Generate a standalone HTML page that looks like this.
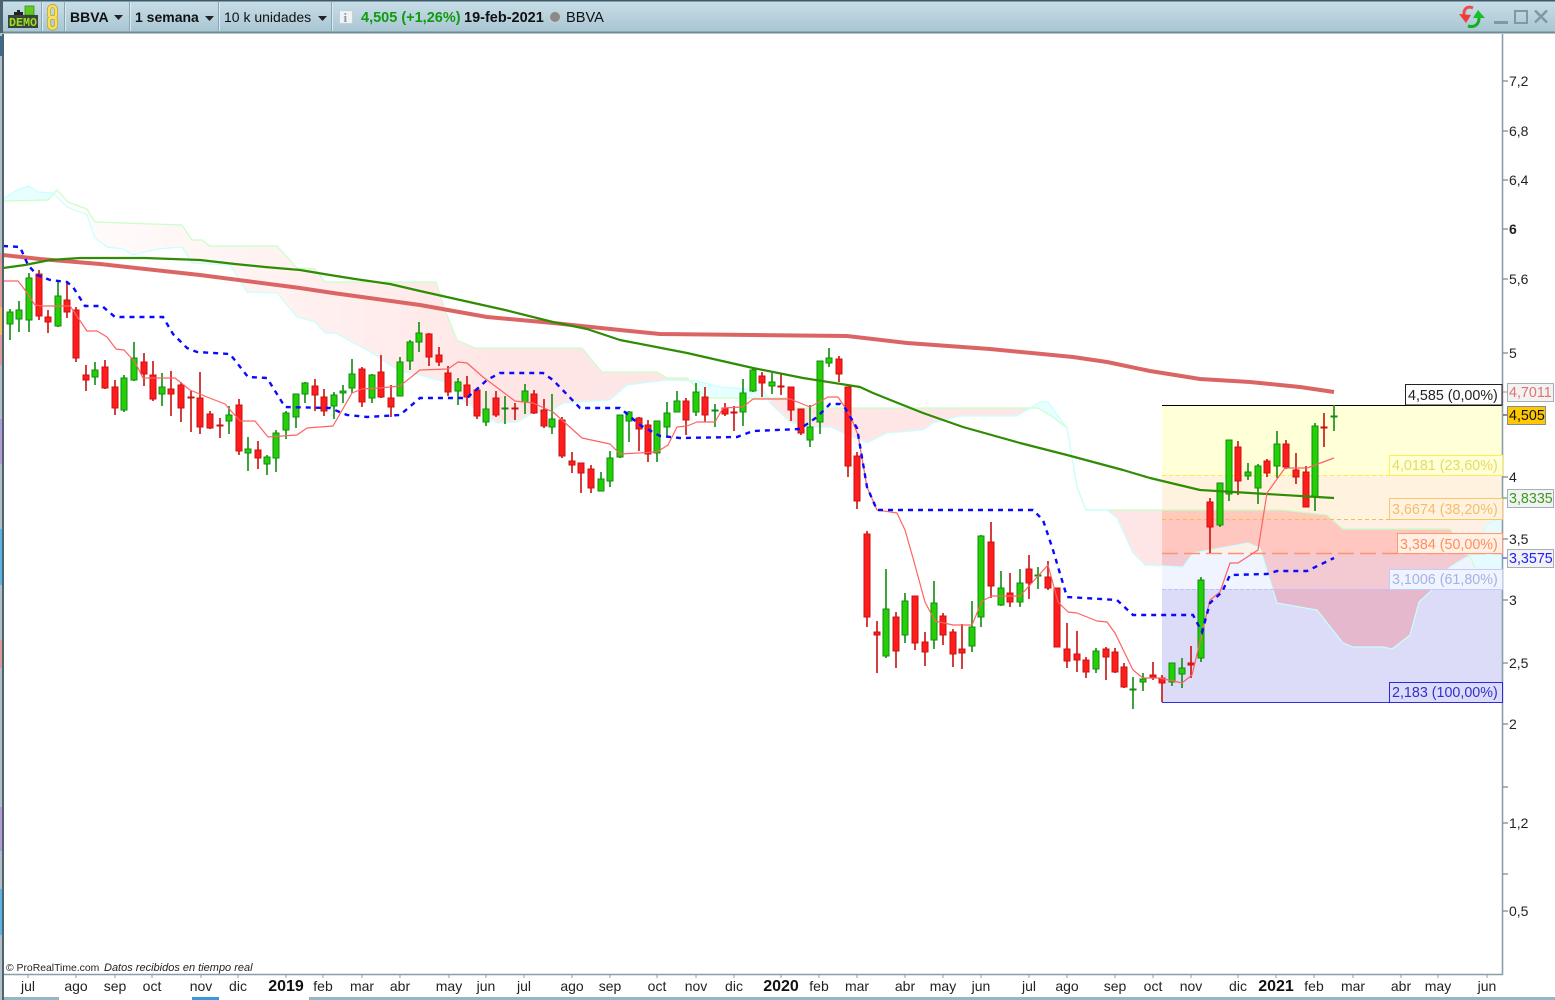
<!DOCTYPE html>
<html><head><meta charset="utf-8"><title>BBVA</title>
<style>
html,body{margin:0;padding:0;background:#fff;width:1555px;height:1000px;overflow:hidden}
svg{display:block;font-family:"Liberation Sans",sans-serif}
.ax{font-size:14px;fill:#222}
.xl{font-size:14px;fill:#222;text-anchor:middle}
.xb{font-size:16px;font-weight:bold;fill:#111;text-anchor:middle}
.fb{font-size:14.3px}
.tb{font-size:14px;fill:#111}
.b{font-weight:bold}
</style></head><body>
<svg width="1555" height="1000" viewBox="0 0 1555 1000" xmlns="http://www.w3.org/2000/svg">
<defs>
<linearGradient id="tbg" x1="0" y1="0" x2="0" y2="1"><stop offset="0" stop-color="#c9dfe8"/><stop offset="1" stop-color="#a7c5d2"/></linearGradient>
<linearGradient id="pk" gradientUnits="userSpaceOnUse" x1="60" y1="0" x2="500" y2="0"><stop offset="0" stop-color="#fffcfc"/><stop offset=".5" stop-color="#fff2f1"/><stop offset="1" stop-color="#ffe6e6"/></linearGradient>
<clipPath id="fibc"><rect x="1162" y="405" width="340" height="297"/></clipPath>
<clipPath id="chart"><rect x="4" y="34" width="1498" height="940"/></clipPath>
</defs>
<rect width="1555" height="1000" fill="#fff"/>

<!-- left edge -->
<rect x="0" y="34" width="2" height="966" fill="#b4c0c8"/>
<rect x="0" y="36" width="2" height="20" fill="#3a6a90"/>
<rect x="0" y="253" width="2" height="54" fill="#dd9a98"/>
<rect x="0" y="307" width="2" height="28" fill="#f0c060"/>
<rect x="0" y="335" width="2" height="30" fill="#dd9a98"/>
<rect x="0" y="419" width="2" height="45" fill="#b59ad8"/>
<rect x="0" y="529" width="2" height="56" fill="#5cb4e4"/>
<rect x="0" y="640" width="2" height="28" fill="#dd9a98"/>
<rect x="0" y="807" width="2" height="44" fill="#b59ad8"/>
<rect x="0" y="889" width="2" height="46" fill="#5cb4e4"/>
<rect x="2" y="34" width="2" height="966" fill="#4d6470"/>

<!-- cloud base -->
<g clip-path="url(#chart)">
<polygon fill="#e8ffff" points="3,199 17,190 29,186 38,192 53,193 55,193 48,200 3,201"/>
<polygon fill="url(#pk)" points="55,193 57,190 68,202 87,209 95,222 182,225 192,240 202,240 210,246 277,246 297,268 315,269 325,282 436,282 445,310 457,340 475,348 582,348 602,372 657,372 667,378 687,378 689,380 667,380 627,385 610,400 563,403 553,410 533,413 517,422 497,423 477,410 463,400 447,382 433,379 420,375 405,372 393,367 367,350 335,333 325,333 315,322 297,317 277,293 247,292 230,265 192,263 182,247 157,249 133,255 123,249 107,247 95,238 87,215 67,207"/>
<polygon fill="#e8ffff" points="689,380 697,381 720,387 763,390 770,398 707,398"/>
<polygon fill="#ffe6e6" points="770,398 787,398 792,408 1032,408 1017,416 960,416 933,423 923,430 887,433 867,443 850,437 830,427 810,427 790,422 770,403"/>
<polygon fill="#e8ffff" points="1032,408 1040,402 1048,402 1067,428 1053,417 1038,408"/>
<polygon fill="#ffe6e6" points="1086,510 1283,510 1327,515 1343,529 1450,529 1470,556 1450,567 1430,592 1419,602 1410,635 1392,649 1383,647 1353,647 1343,643 1317,610 1277,603 1260,548 1248,543 1193,553 1183,567 1145,565 1133,553 1117,518 1107,510"/>

<!-- fibonacci bands -->
<rect x="1162" y="405" width="340" height="70" fill="#ffffd8"/>
<rect x="1162" y="475" width="340" height="44" fill="#fff3e0"/>
<rect x="1162" y="519" width="340" height="34" fill="#fff0e5"/>
<rect x="1162" y="553" width="340" height="36" fill="#f0f4ff"/>
<rect x="1162" y="589" width="340" height="113" fill="#dcdcf8"/>
<polygon clip-path="url(#fibc)" fill="#ff5a5a" fill-opacity=".27" points="1086,510 1283,510 1327,515 1343,529 1450,529 1470,556 1450,567 1430,592 1419,602 1410,635 1392,649 1383,647 1353,647 1343,643 1317,610 1277,603 1260,548 1248,543 1193,553 1183,567 1145,565 1133,553 1117,518 1107,510"/>
<polygon fill="#e4fbff" fill-opacity=".85" points="1470,556 1487,524 1502,518 1502,568 1475,568"/>

<!-- cloud edges -->
<polyline fill="none" stroke="#c8ffc8" stroke-width="1.2" points="3,201 48,200 57,190 68,202 87,209 95,222 182,225 192,240 202,240 210,246 277,246 297,268 315,269 325,282 436,282 445,310 457,340 475,348 582,348 602,372 657,372 667,378 687,378 707,398 787,398 792,408 1038,408 1053,417 1067,428 1077,487 1086,510 1283,510 1327,515 1343,529 1450,529 1470,556 1475,568"/>
<polyline fill="none" stroke="#c8ffff" stroke-width="1.2" points="3,199 17,190 29,186 38,192 53,193 67,207 87,215 95,238 107,247 123,249 133,255 157,249 182,247 192,263 230,265 247,292 277,293 297,317 315,322 325,333 335,333 367,350 393,367 405,372 420,375 433,379 447,382 463,400 477,410 497,423 517,422 533,413 553,410 563,403 610,400 627,385 667,380 697,381 720,387 763,390 770,403 790,422 810,427 830,427 850,435 867,443 887,433 923,430 933,423 960,416 1017,416 1040,402 1048,402 1067,428 1077,487 1086,510 1107,510 1117,518 1133,553 1145,565 1183,567 1193,553 1248,543 1260,548 1277,603 1317,610 1343,643 1353,647 1383,647 1392,649 1410,635 1419,602 1430,592 1450,567 1470,555 1487,524 1502,518"/>

<!-- fib lines -->
<line x1="1162" y1="405.5" x2="1502" y2="405.5" stroke="#000" stroke-width="1"/>
<line x1="1162" y1="475.5" x2="1502" y2="475.5" stroke="#ffee33" stroke-width="1" stroke-dasharray="4 3"/>
<line x1="1162" y1="519.5" x2="1502" y2="519.5" stroke="#ffb84d" stroke-width="1" stroke-dasharray="4 3"/>
<line x1="1162" y1="553.5" x2="1502" y2="553.5" stroke="#ff9070" stroke-width="1.6" stroke-dasharray="16 6"/>
<line x1="1162" y1="589.5" x2="1502" y2="589.5" stroke="#b8c4ff" stroke-width="1" stroke-dasharray="4 2"/>
<line x1="1162" y1="702.5" x2="1502" y2="702.5" stroke="#3030e0" stroke-width="1"/>

<!-- green candles -->
<path fill="none" stroke="#0f8c0f" stroke-width="1.6" d="M10 309V340M19 301V332M29 273V332M58 282V327M95 362V385M124 375V412M134 342V381M162 373V406M229 406V434M248 437V471M267 455V475M276 430V472M286 411V439M296 394V428M305 382V403M334 392V419M343 385V403M352 359V393M372 374V403M400 357V396M410 340V370M419 322V352M458 378V405M486 391V426M505 396V424M525 384V414M552 394V434M601 472V491M610 451V487M620 415V458M629 411V442M657 421V462M667 402V437M677 391V412M696 383V416M715 404V427M743 379V426M753 369V392M772 373V394M810 405V447M820 361V434M829 348V367M886 569V658M905 593V643M934 581V649M972 601V652M981 535V627M1001 571V606M1020 569V607M1038 567V589M1096 648V673M1133 677V709M1143 673V691M1172 663V686M1182 658V688M1201 577V662M1220 483V527M1229 440V501M1248 463V480M1258 464V504M1277 431V478M1315 423V511M1334 405V431"/>
<path fill="#25cf05" stroke="#0f8c0f" stroke-width="1" d="M7 312h6v12h-6zM16 310h6v9h-6zM26 278h6v42h-6zM55 296h6v30h-6zM92 370h6v7h-6zM121 378h6v32h-6zM131 358h6v22h-6zM159 387h6v7h-6zM226 415h6v6h-6zM245 449h6v4h-6zM264 457h6v7h-6zM273 433h6v25h-6zM283 413h6v17h-6zM293 394h6v23h-6zM302 383h6v11h-6zM331 395h6v11h-6zM340 391h6v2h-6zM349 374h6v14h-6zM369 375h6v23h-6zM397 362h6v34h-6zM407 342h6v19h-6zM416 333h6v9h-6zM455 382h6v9h-6zM483 409h6v13h-6zM502 408h6v1h-6zM522 391h6v11h-6zM549 419h6v8h-6zM598 479h6v12h-6zM607 458h6v23h-6zM617 415h6v42h-6zM626 412h6v9h-6zM654 421h6v32h-6zM664 413h6v14h-6zM674 401h6v11h-6zM693 392h6v20h-6zM712 410h6v1h-6zM740 393h6v19h-6zM750 370h6v21h-6zM769 382h6v4h-6zM807 427h6v13h-6zM817 361h6v61h-6zM826 358h6v5h-6zM883 609h6v47h-6zM902 601h6v34h-6zM931 603h6v37h-6zM969 627h6v19h-6zM978 536h6v81h-6zM998 588h6v17h-6zM1017 583h6v19h-6zM1035 575h6v1h-6zM1093 651h6v18h-6zM1130 689h6v1h-6zM1140 679h6v3h-6zM1169 663h6v19h-6zM1179 668h6v6h-6zM1198 580h6v78h-6zM1217 483h6v42h-6zM1226 440h6v54h-6zM1245 472h6v4h-6zM1255 466h6v22h-6zM1274 444h6v22h-6zM1312 426h6v71h-6zM1331 416h6v1h-6z"/>
<!-- red candles -->
<path fill="none" stroke="#c81010" stroke-width="1.6" d="M39 270V320M48 310V333M67 282V318M76 307V362M86 365V391M105 360V389M115 380V415M144 353V386M153 361V401M171 371V416M181 382V422M191 391V432M200 372V434M210 411V429M220 418V438M239 399V455M258 441V469M315 379V411M324 389V416M362 367V407M381 355V398M391 385V417M429 333V366M439 347V366M448 366V396M467 376V406M477 389V419M496 391V417M515 403V420M534 390V414M544 399V428M562 417V458M572 452V473M581 463V493M591 465V493M639 417V451M648 420V462M686 398V435M705 387V422M725 403V416M734 406V431M762 372V397M781 373V395M791 387V421M801 409V435M839 356V382M848 387V477M857 452V509M867 531V627M877 621V673M896 612V668M915 596V650M925 632V666M943 613V645M953 629V667M962 624V669M991 522V598M1010 573V607M1029 555V599M1048 561V590M1057 588V647M1067 623V668M1077 631V672M1086 657V678M1106 647V680M1115 648V673M1124 663V688M1153 662V680M1162 675V702M1191 646V678M1210 498V553M1238 441V495M1267 459V477M1286 440V469M1296 453V484M1306 466V507M1324 413V447"/>
<path fill="#ff1c1c" stroke="#c81010" stroke-width="1" d="M36 274h6v42h-6zM45 317h6v5h-6zM64 300h6v12h-6zM73 310h6v48h-6zM83 375h6v5h-6zM102 367h6v21h-6zM112 387h6v21h-6zM141 362h6v12h-6zM150 375h6v24h-6zM168 389h6v5h-6zM178 385h6v23h-6zM188 397h6v1h-6zM197 398h6v29h-6zM207 414h6v14h-6zM217 425h6v1h-6zM236 405h6v46h-6zM255 450h6v8h-6zM312 386h6v9h-6zM321 397h6v14h-6zM359 369h6v33h-6zM378 372h6v25h-6zM388 398h6v9h-6zM426 334h6v23h-6zM436 355h6v7h-6zM445 373h6v19h-6zM464 385h6v12h-6zM474 390h6v26h-6zM493 398h6v17h-6zM512 408h6v1h-6zM531 394h6v19h-6zM541 410h6v16h-6zM559 420h6v36h-6zM569 461h6v4h-6zM578 463h6v10h-6zM588 469h6v19h-6zM636 418h6v11h-6zM645 425h6v29h-6zM683 401h6v19h-6zM702 397h6v18h-6zM722 408h6v6h-6zM731 412h6v1h-6zM759 376h6v7h-6zM778 386h6v1h-6zM788 387h6v23h-6zM798 409h6v24h-6zM836 359h6v15h-6zM845 387h6v79h-6zM854 456h6v45h-6zM864 534h6v83h-6zM874 632h6v3h-6zM893 617h6v34h-6zM912 596h6v47h-6zM922 642h6v10h-6zM940 616h6v19h-6zM950 632h6v22h-6zM959 649h6v4h-6zM988 542h6v44h-6zM1007 593h6v9h-6zM1026 569h6v14h-6zM1045 577h6v11h-6zM1054 588h6v59h-6zM1064 649h6v12h-6zM1074 654h6v6h-6zM1083 660h6v12h-6zM1103 649h6v8h-6zM1112 652h6v20h-6zM1121 667h6v20h-6zM1150 675h6v2h-6zM1159 678h6v5h-6zM1188 663h6v2h-6zM1207 502h6v25h-6zM1235 447h6v34h-6zM1264 461h6v12h-6zM1283 444h6v23h-6zM1293 470h6v7h-6zM1303 472h6v35h-6zM1321 427h6v1h-6z"/>

<!-- moving averages -->
<polyline fill="none" stroke="#db6464" stroke-width="4" stroke-linejoin="round" points="3,255 40,259 100,264 200,275 300,288 333,293 420,305 487,317 553,323 620,330 660,334 753,335 847,336 907,343 990,349 1073,357 1107,362 1150,371 1200,379 1250,382 1300,387 1334,392"/>
<polyline fill="none" stroke="#2f8c05" stroke-width="2.2" stroke-linejoin="round" points="3,268 25,265 50,260 80,258 145,258 200,260 235,264 265,267 300,270 330,275 355,279 390,284 420,291 505,310 553,322 587,329 620,340 687,353 753,368 803,378 860,387 873,393 923,413 963,427 1020,443 1067,455 1123,470 1150,478 1200,490 1267,494 1334,498"/>
<polyline fill="none" stroke="#ff6262" stroke-width="1.2" stroke-linejoin="round" points="3,281 18,281 25,290 35,305 42,306 70,306 87,331 97,331 107,337 116,349 124,350 135,362 143,378 175,378 190,390 207,397 225,404 240,421 255,421 268,437 297,435 307,428 333,426 352,393 362,389 380,388 400,386 420,370 448,369 458,362 467,363 483,377 515,401 533,403 553,412 582,438 610,444 620,454 657,452 668,445 677,427 687,426 697,422 715,422 723,408 743,407 753,399 790,399 810,407 828,397 838,397 850,415 858,435 867,487 877,510 897,513 905,530 913,558 925,602 935,621 953,625 972,625 982,601 992,596 1020,596 1048,565 1058,602 1068,612 1077,613 1097,621 1107,622 1115,633 1133,670 1143,678 1160,678 1182,683 1192,675 1210,600 1220,592 1230,563 1238,563 1258,550 1267,493 1285,468 1307,468 1334,458"/>
<polyline fill="none" stroke="#0a0aff" stroke-width="2.4" stroke-dasharray="5 5" points="3,246 20,247 28,265 37,275 50,280 67,282 73,287 85,306 102,306 115,317 163,317 173,334 187,348 197,352 230,354 248,377 267,378 285,407 330,408 347,415 367,417 400,415 420,398 467,398 487,380 500,373 543,373 553,380 580,408 620,408 640,425 660,436 680,438 737,437 753,431 800,429 817,417 830,404 840,404 845,408 857,428 867,487 877,510 1033,510 1043,520 1053,550 1067,597 1117,600 1133,615 1193,615 1202,632 1210,603 1222,592 1230,575 1267,574 1277,571 1307,571 1334,558"/>
</g>

<!-- axes -->
<line x1="1502.5" y1="34" x2="1502.5" y2="975" stroke="#8a9ea8" stroke-width="1.6"/>
<line x1="4" y1="974.5" x2="1503" y2="974.5" stroke="#8a9ea8" stroke-width="1.5"/>
<path stroke="#667" stroke-width="1" d="M1503 81h5M1503 131h5M1503 180h5M1503 229h5M1503 279h5M1503 353h5M1503 477h5M1503 539h5M1503 600h5M1503 663h5M1503 724h5M1503 787h5M1503 823h5M1503 874h5M1503 911h5"/>
<g class="ax">
<text class="ax" x="1509" y="86">7,2</text>
<text class="ax" x="1509" y="136">6,8</text>
<text class="ax" x="1509" y="185">6,4</text>
<text class="ax b" x="1509" y="234">6</text>
<text class="ax" x="1509" y="284">5,6</text>
<text class="ax" x="1509" y="358">5</text>
<text class="ax" x="1509" y="482">4</text>
<text class="ax" x="1509" y="544">3,5</text>
<text class="ax" x="1509" y="605">3</text>
<text class="ax" x="1509" y="668">2,5</text>
<text class="ax" x="1509" y="729">2</text>
<text class="ax" x="1509" y="828">1,2</text>
<text class="ax" x="1509" y="916">0,5</text>
</g>

<!-- fib labels -->
<path d="M1405.5 405V384.5H1502V405Z" fill="#fff" stroke="#222"/>
<text class="fb" x="1408" y="400" fill="#222">4,585 (0,00%)</text>
<rect x="1389.5" y="455.5" width="113" height="20" fill="#ffffd8" stroke="#ffee55"/>
<text class="fb" x="1392" y="470" fill="#e4dc62">4,0181 (23,60%)</text>
<rect x="1389.5" y="498.5" width="113" height="21" fill="#fff3e0" stroke="#ffc468"/>
<text class="fb" x="1392" y="514" fill="#f4bc6c">3,6674 (38,20%)</text>
<rect x="1397.5" y="533.5" width="105" height="20" fill="#fff0e5" stroke="#ff9a70"/>
<text class="fb" x="1400" y="549" fill="#ff8e5e">3,384 (50,00%)</text>
<rect x="1389.5" y="569.5" width="113" height="20" fill="#f0f4ff" stroke="#c0ccff"/>
<text class="fb" x="1392" y="584" fill="#a4b2e4">3,1006 (61,80%)</text>
<rect x="1389.5" y="682.5" width="113" height="20" fill="#dcdcf8" stroke="#2a2ae0"/>
<text class="fb" x="1392" y="697" fill="#3030d0">2,183 (100,00%)</text>

<!-- right badges -->
<path stroke="#e07070" d="M1503 392h4"/><path stroke="#222" d="M1503 415h4"/><path stroke="#3a9a20" d="M1503 498h4"/><path stroke="#2020ff" d="M1503 558h4"/>
<rect x="1507.5" y="383.5" width="46" height="18" fill="#f2f2f2" stroke="#a4b0b8"/>
<text class="fb" x="1509" y="397" fill="#e27272">4,7011</text>
<rect x="1507.5" y="406.5" width="38" height="18" fill="#ffc800" stroke="#7f8f98"/>
<text class="fb" x="1509" y="420" fill="#111">4,505</text>
<rect x="1507.5" y="489.5" width="46" height="18" fill="#f2f2f2" stroke="#a4b0b8"/>
<text class="fb" x="1509" y="503" fill="#3a9a20">3,8335</text>
<rect x="1507.5" y="549.5" width="46" height="18" fill="#f2f2f2" stroke="#a4b0b8"/>
<text class="fb" x="1509" y="563" fill="#2020ff">3,3575</text>

<!-- x labels -->
<text class="xl" x="28" y="991">jul</text><text class="xl" x="76" y="991">ago</text><text class="xl" x="115" y="991">sep</text><text class="xl" x="152" y="991">oct</text><text class="xl" x="201" y="991">nov</text><text class="xl" x="238" y="991">dic</text><text class="xb" x="286" y="991">2019</text><text class="xl" x="323" y="991">feb</text><text class="xl" x="362" y="991">mar</text><text class="xl" x="400" y="991">abr</text><text class="xl" x="449" y="991">may</text><text class="xl" x="486" y="991">jun</text><text class="xl" x="524" y="991">jul</text><text class="xl" x="572" y="991">ago</text><text class="xl" x="610" y="991">sep</text><text class="xl" x="657" y="991">oct</text><text class="xl" x="696" y="991">nov</text><text class="xl" x="734" y="991">dic</text><text class="xb" x="781" y="991">2020</text><text class="xl" x="819" y="991">feb</text><text class="xl" x="857" y="991">mar</text><text class="xl" x="905" y="991">abr</text><text class="xl" x="943" y="991">may</text><text class="xl" x="981" y="991">jun</text><text class="xl" x="1029" y="991">jul</text><text class="xl" x="1067" y="991">ago</text><text class="xl" x="1115" y="991">sep</text><text class="xl" x="1153" y="991">oct</text><text class="xl" x="1191" y="991">nov</text><text class="xl" x="1238" y="991">dic</text><text class="xb" x="1276" y="991">2021</text><text class="xl" x="1314" y="991">feb</text><text class="xl" x="1353" y="991">mar</text><text class="xl" x="1401" y="991">abr</text><text class="xl" x="1438" y="991">may</text><text class="xl" x="1487" y="991">jun</text>

<path stroke="#99a" stroke-width="1" d="M28 975v3M76 975v3M115 975v3M152 975v3M201 975v3M238 975v3M286 975v3M323 975v3M362 975v3M400 975v3M449 975v3M486 975v3M524 975v3M572 975v3M610 975v3M657 975v3M696 975v3M734 975v3M781 975v3M819 975v3M857 975v3M905 975v3M943 975v3M981 975v3M1029 975v3M1067 975v3M1115 975v3M1153 975v3M1191 975v3M1238 975v3M1276 975v3M1314 975v3M1353 975v3M1401 975v3M1438 975v3M1487 975v3"/>

<text x="6" y="971" font-size="10.4" fill="#222">© ProRealTime.com</text>
<text x="104" y="971" font-size="11" font-style="italic" fill="#222">Datos recibidos en tiempo real</text>

<!-- bottom strip -->
<rect x="4" y="997" width="1551" height="3" fill="#97b6c3"/>
<rect x="59" y="997" width="250" height="3" fill="#fff"/>
<rect x="192" y="997" width="27" height="3" fill="#3c96dc"/>

<!-- toolbar -->
<rect x="0" y="0" width="1555" height="33" fill="url(#tbg)"/>
<rect x="0" y="0" width="1555" height="1.5" fill="#3d5a68"/>
<rect x="0" y="31.5" width="1555" height="2" fill="#6f8b97"/>
<rect x="0" y="0" width="3" height="33" fill="#4d6470"/>
<g stroke="#8ba6b2" stroke-width="1"><path d="M41.5 2V31M64.5 2V31M129.5 2V31M218.5 2V31M331.5 2V31"/></g>
<g stroke="#dceaf0" stroke-width="1"><path d="M42.5 2V31M65.5 2V31M130.5 2V31M219.5 2V31M332.5 2V31"/></g>

<!-- demo icon -->
<rect x="25" y="6" width="9" height="9" fill="#5fcb1e" stroke="#3f8f18" stroke-width=".8"/>
<rect x="14" y="12" width="9" height="4" fill="#222"/><rect x="17" y="10" width="3" height="3" fill="#222"/>
<rect x="8" y="15" width="30" height="13" fill="#3a443a"/>
<text x="9" y="26" font-family="Liberation Mono,monospace" font-size="12" font-weight="bold" fill="#9de022" textLength="28" lengthAdjust="spacingAndGlyphs">DEMO</text>
<!-- chain icon -->
<g fill="none">
<rect x="49" y="6" width="7" height="12" rx="3.5" stroke="#b8a030" stroke-width="4"/>
<rect x="49" y="17" width="7" height="11.5" rx="3.5" stroke="#b8a030" stroke-width="4"/>
<rect x="49" y="6" width="7" height="12" rx="3.5" stroke="#f6e060" stroke-width="2.6"/>
<rect x="49" y="17" width="7" height="11.5" rx="3.5" stroke="#f6e060" stroke-width="2.6"/>
</g>

<text class="tb b" x="70" y="22" font-size="14.2">BBVA</text>
<polygon points="114,15 123,15 118.5,20" fill="#222"/>
<text class="tb b" x="135" y="22">1 semana</text>
<polygon points="205,16 214,16 209.5,21" fill="#222"/>
<text class="tb" x="224" y="22">10 k unidades</text>
<polygon points="318,16 327,16 322.5,21" fill="#222"/>
<rect x="339.5" y="10.5" width="13" height="13" fill="#eef2f4" stroke="#c4d0d6"/>
<text x="343.5" y="22" font-size="13" font-weight="bold" fill="#8a9aa2" font-family="Liberation Serif,serif">i</text>
<text class="b" x="361" y="22" style="font-size:14.5px" fill="#109a10">4,505 (+1,26%)</text>
<text class="b" x="464" y="22" style="font-size:14.5px" fill="#111">19-feb-2021</text>
<circle cx="555" cy="17" r="5.5" fill="#8a8a8a" stroke="#c6ced2"/>
<text x="566" y="22" style="font-size:14.6px" fill="#111">BBVA</text>

<!-- refresh icon -->
<path d="M1473 8C1467 5.5 1463.5 9 1464 15" fill="none" stroke="#f04a4a" stroke-width="3"/>
<polygon points="1459,14 1471,15 1466,23" fill="#ee3c3c"/>
<path d="M1468 26C1475 28 1479.5 24 1479 17" fill="none" stroke="#10b020" stroke-width="3"/>
<polygon points="1473,18 1485,18 1478,10" fill="#18c028"/>

<!-- window buttons -->
<rect x="1494" y="21" width="14" height="3" fill="#7e98a4"/>
<rect x="1515" y="11" width="12" height="12" fill="none" stroke="#7e98a4" stroke-width="2"/>
<path d="M1535 10.5L1547 22.5M1547 10.5L1535 22.5" stroke="#7e98a4" stroke-width="2.6"/>
</svg>
</body></html>
